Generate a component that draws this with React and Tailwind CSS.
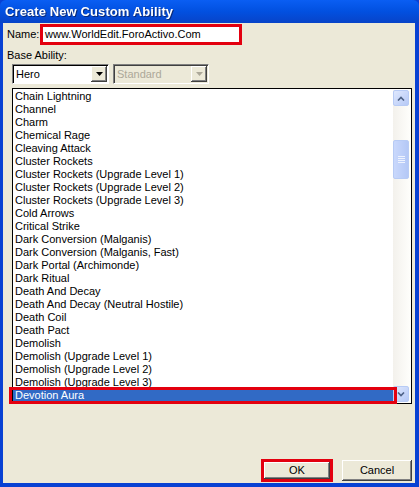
import React from "react";

const abilities = [
  "Chain Lightning",
  "Channel",
  "Charm",
  "Chemical Rage",
  "Cleaving Attack",
  "Cluster Rockets",
  "Cluster Rockets (Upgrade Level 1)",
  "Cluster Rockets (Upgrade Level 2)",
  "Cluster Rockets (Upgrade Level 3)",
  "Cold Arrows",
  "Critical Strike",
  "Dark Conversion (Malganis)",
  "Dark Conversion (Malganis, Fast)",
  "Dark Portal (Archimonde)",
  "Dark Ritual",
  "Death And Decay",
  "Death And Decay (Neutral Hostile)",
  "Death Coil",
  "Death Pact",
  "Demolish",
  "Demolish (Upgrade Level 1)",
  "Demolish (Upgrade Level 2)",
  "Demolish (Upgrade Level 3)",
  "Devotion Aura",
];

const raised =
  "shadow-[inset_-1px_-1px_#404040,inset_1px_1px_#ffffff,inset_-2px_-2px_#808080,inset_2px_2px_#ece9d8]";

const ComboArrow = ({ disabled }) => (
  <div className={`w-[16px] h-[16px] bg-[#ece9d8] flex items-center justify-center ${raised}`}>
    <svg width="7" height="4" viewBox="0 0 7 4">
      <path d="M0 0h7L3.5 4z" fill={disabled ? "#aca899" : "#000"} />
    </svg>
  </div>
);

const ScrollButton = ({ up }) => (
  <div className="w-[16px] h-[16px] rounded-[2px] border border-[#b7cbf5] bg-gradient-to-br from-[#dfe8fd] to-[#b6c9f6] flex items-center justify-center">
    <svg width="8" height="5" viewBox="0 0 8 5">
      <path
        d={up ? "M1 4.5L4 1.5L7 4.5" : "M1 0.5L4 3.5L7 0.5"}
        stroke="#4d6185"
        strokeWidth="1.6"
        fill="none"
      />
    </svg>
  </div>
);

export default function App() {
  return (
    <div className="w-[419px] h-[487px] flex flex-col bg-[#0841d3] font-['Liberation_Sans',Arial,sans-serif] text-[11px] text-black overflow-hidden">
      <div className="h-[23px] shrink-0 bg-gradient-to-b from-[#0a5ef3] via-[#0250e0] to-[#0743c8] flex items-center pl-[5px] rounded-t-[6px]">
        <span className="text-white font-bold text-[13px] tracking-[0.1px] drop-shadow-[1px_1px_0_#0a2a7a]">
          Create New Custom Ability
        </span>
      </div>

      <div className="flex-1 bg-[#ece9d8] ml-[3px] mr-[4px] mb-[4px] flex flex-col">
        <div className="flex items-center mt-[1px] h-[21px]">
          <span className="pl-[4px] w-[37px]">Name:</span>
          <div className="w-[202px] h-[21px] border-[3px] border-[#e3000f] bg-white flex items-center pl-[2px]">
            www.WorldEdit.ForoActivo.Com
          </div>
        </div>

        <div className="pl-[4px] mt-[4px] leading-[13px]">Base Ability:</div>

        <div className="flex gap-[4px] ml-[9px] mt-[2px]">
          <div className="w-[97px] h-[20px] bg-white border border-[#7f7f7f] border-b-[#ffffff] border-r-[#ffffff] flex items-center justify-between pl-[2px] pr-[1px] shadow-[inset_1px_1px_#000]">
            <span className="pl-[1px]">Hero</span>
            <ComboArrow />
          </div>
          <div className="w-[96px] h-[20px] bg-[#ece9d8] border border-[#7f7f7f] border-b-[#ffffff] border-r-[#ffffff] flex items-center justify-between pl-[2px] pr-[1px] shadow-[inset_1px_1px_#404040]">
            <span className="pl-[1px] text-[#aca899]">Standard</span>
            <ComboArrow disabled />
          </div>
        </div>

        <div className="relative ml-[9px] mt-[4px] w-[400px] h-[316px] bg-white border border-black flex">
          <div className="flex-1 pt-[1px]">
            {abilities.map((name) => {
              const selected = name === "Devotion Aura";
              return (
                <div
                  key={name}
                  className={`h-[13px] leading-[13px] pl-[2px] whitespace-nowrap ${
                    selected ? "bg-[#316ac5] text-white" : ""
                  }`}
                >
                  {name}
                </div>
              );
            })}
          </div>
          <div className="w-[17px] my-[1px] mr-[1px] bg-gradient-to-r from-[#f3f1ec] to-[#fefefb] flex flex-col">
            <ScrollButton up />
            <div className="h-[34px]" />
            <div className="h-[39px] w-[16px] rounded-[2px] border border-[#b7cbf5] bg-gradient-to-r from-[#c9d8fc] to-[#b4c8f6] flex flex-col items-center justify-center gap-[1px]">
              <div className="w-[7px] h-[1px] bg-[#eef3fe]" />
              <div className="w-[7px] h-[1px] bg-[#eef3fe]" />
              <div className="w-[7px] h-[1px] bg-[#eef3fe]" />
              <div className="w-[7px] h-[1px] bg-[#eef3fe]" />
            </div>
            <div className="flex-1" />
            <ScrollButton />
          </div>
          <div className="absolute left-[-4px] top-[298px] w-[388px] h-[17px] border-[3px] border-[#e3000f]" />
        </div>

        <div className="flex justify-end items-center gap-[9px] mt-[55px] mr-[3px]">
          <div className="w-[72px] h-[23px] border-[3px] border-[#e3000f] flex">
            <div className={`flex-1 bg-[#ece9d8] flex items-center justify-center ${raised}`}>OK</div>
          </div>
          <div className={`w-[70px] h-[21px] bg-[#ece9d8] flex items-center justify-center ${raised}`}>
            Cancel
          </div>
        </div>
      </div>
    </div>
  );
}
